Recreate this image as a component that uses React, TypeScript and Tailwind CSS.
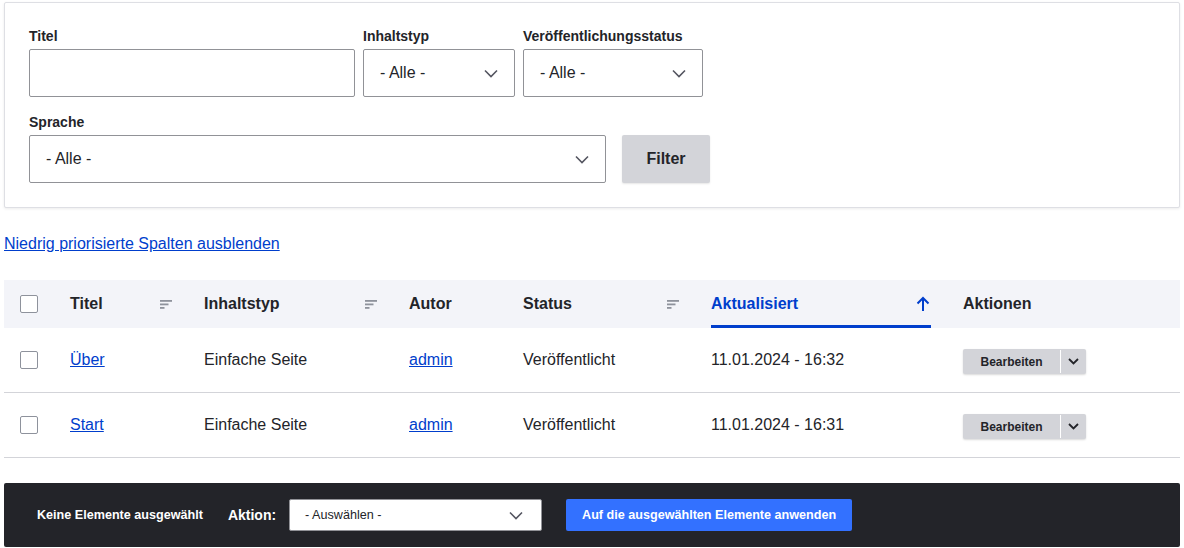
import React from "react";

const font = { fontFamily: '"Liberation Sans", Arial, sans-serif' };

function Chevron({ className = "" }: { className?: string }) {
  return (
    <svg className={className} width="14" height="9" viewBox="0 0 14 9" fill="none">
      <path d="M1 1.5l6 6 6-6" stroke="#545560" strokeWidth="1.6" />
    </svg>
  );
}

function SortIcon() {
  return (
    <svg width="12" height="9" viewBox="0 0 12 9">
      <rect x="0" y="0" width="12" height="1.8" fill="#8e929c" />
      <rect x="0" y="3.5" width="8.5" height="1.8" fill="#8e929c" />
      <rect x="0" y="7" width="4.5" height="1.8" fill="#8e929c" />
    </svg>
  );
}

function Checkbox() {
  return <div className="w-[18px] h-[18px] rounded-[2px] border border-[#8e929c] bg-white" />;
}

function SelectBox({ w, label }: { w: string; label: string }) {
  return (
    <div className={`${w} h-[48px] border border-[#919297] rounded-[2px] bg-white flex items-center justify-between pl-[16px] pr-[16px]`}>
      <span className="text-[16px] text-[#232429]">{label}</span>
      <Chevron />
    </div>
  );
}

function Field({ label, children }: { label: string; children: React.ReactNode }) {
  return (
    <div className="flex flex-col">
      <div className="text-[14px] leading-[18px] font-bold text-[#232429] mb-[4px]">{label}</div>
      {children}
    </div>
  );
}

const cols = "grid grid-cols-[50px_134px_205px_114px_188px_252px_233px]";

function Row({ title, date }: { title: string; date: string }) {
  return (
    <div className={`${cols} h-[65px] items-center border-b border-[#d3d4d9] text-[16px] text-[#232429]`}>
      <div className="pl-[16px]"><Checkbox /></div>
      <div className="pl-[16px]"><a className="text-[#003ecc] underline">{title}</a></div>
      <div className="pl-[16px]">Einfache Seite</div>
      <div className="pl-[16px]"><a className="text-[#003ecc] underline">admin</a></div>
      <div className="pl-[16px]">Veröffentlicht</div>
      <div className="pl-[16px]">{date}</div>
      <div className="pl-[16px] pt-[3px]">
        <div className="flex h-[25px] w-[123px] rounded-[2px] bg-[#d3d4d9] shadow-[0_1px_2px_rgba(0,0,0,0.15)]">
          <div className="w-[97px] flex items-center justify-center text-[12px] font-bold text-[#232429]">Bearbeiten</div>
          <div className="w-px bg-white my-[1px]" />
          <div className="flex-1 flex items-center justify-center">
            <svg width="11" height="7" viewBox="0 0 11 7" fill="none">
              <path d="M1 1l4.5 4.5L10 1" stroke="#232429" strokeWidth="1.8" />
            </svg>
          </div>
        </div>
      </div>
    </div>
  );
}

export default function App() {
  return (
    <div className="w-[1184px] h-[548px] bg-white pl-[4px] pr-[4px] pt-[2px] overflow-hidden" style={font}>
      <div className="border border-[#dedfe4] rounded-[2px] shadow-[0_1px_3px_rgba(0,0,0,0.08)] bg-white px-[24px] pt-[24px] pb-[24px]">
        <div className="flex gap-[8px]">
          <Field label="Titel">
            <div className="w-[326px] h-[48px] border border-[#919297] rounded-[2px] bg-white" />
          </Field>
          <Field label="Inhaltstyp">
            <SelectBox w="w-[152px]" label="- Alle -" />
          </Field>
          <Field label="Veröffentlichungsstatus">
            <SelectBox w="w-[180px]" label="- Alle -" />
          </Field>
        </div>
        <div className="flex gap-[16px] items-end mt-[16px]">
          <Field label="Sprache">
            <SelectBox w="w-[577px]" label="- Alle -" />
          </Field>
          <div className="w-[88px] h-[48px] bg-[#d3d4d9] rounded-[2px] flex items-center justify-center text-[16px] font-bold text-[#232429] shadow-[0_1px_2px_rgba(0,0,0,0.1)]">
            Filter
          </div>
        </div>
      </div>

      <div className="mt-[27px] leading-[18px]">
        <a className="text-[16px] text-[#003ecc] underline">Niedrig priorisierte Spalten ausblenden</a>
      </div>

      <div className="mt-[27px]">
        <div className={`${cols} h-[48px] bg-[#f3f4f9] text-[16px] font-bold text-[#232429]`}>
          <div className="pl-[16px] flex items-center"><Checkbox /></div>
          <div className="pl-[16px] pr-[16px] flex items-center justify-between">
            <span>Titel</span>
            <SortIcon />
          </div>
          <div className="pl-[16px] pr-[16px] flex items-center justify-between">
            <span>Inhaltstyp</span>
            <SortIcon />
          </div>
          <div className="pl-[16px] flex items-center">Autor</div>
          <div className="pl-[16px] pr-[16px] flex items-center justify-between">
            <span>Status</span>
            <SortIcon />
          </div>
          <div className="pl-[16px] pr-[16px] flex">
            <div className="flex-1 flex items-center justify-between border-b-[3px] border-[#003ecc] pt-[3px] text-[#003ecc]">
              <span>Aktualisiert</span>
              <svg width="14" height="16" viewBox="0 0 14 16" fill="none" className="mr-[1px]">
                <path d="M7 15V2M1.5 7.5L7 2l5.5 5.5" stroke="#003ecc" strokeWidth="2" />
              </svg>
            </div>
          </div>
          <div className="pl-[16px] flex items-center">Aktionen</div>
        </div>
        <Row title="Über" date="11.01.2024 - 16:32" />
        <Row title="Start" date="11.01.2024 - 16:31" />
      </div>

      <div className="mt-[25px] h-[64px] bg-[#232429] rounded-[2px] flex items-center pl-[33px]">
        <span className="text-[12.6px] font-bold text-white">Keine Elemente ausgewählt</span>
        <span className="ml-[25px] text-[14px] font-bold text-white">Aktion:</span>
        <div className="ml-[13px] w-[253px] h-[32px] bg-white border border-[#919297] rounded-[2px] flex items-center justify-between pl-[15px] pr-[18px]">
          <span className="text-[12.6px] text-[#232429]">- Auswählen -</span>
          <Chevron />
        </div>
        <div className="ml-[24px] w-[286px] h-[32px] bg-[#3371ff] rounded-[2px] flex items-center justify-center text-[12.6px] font-bold text-white">
          Auf die ausgewählten Elemente anwenden
        </div>
      </div>
    </div>
  );
}
